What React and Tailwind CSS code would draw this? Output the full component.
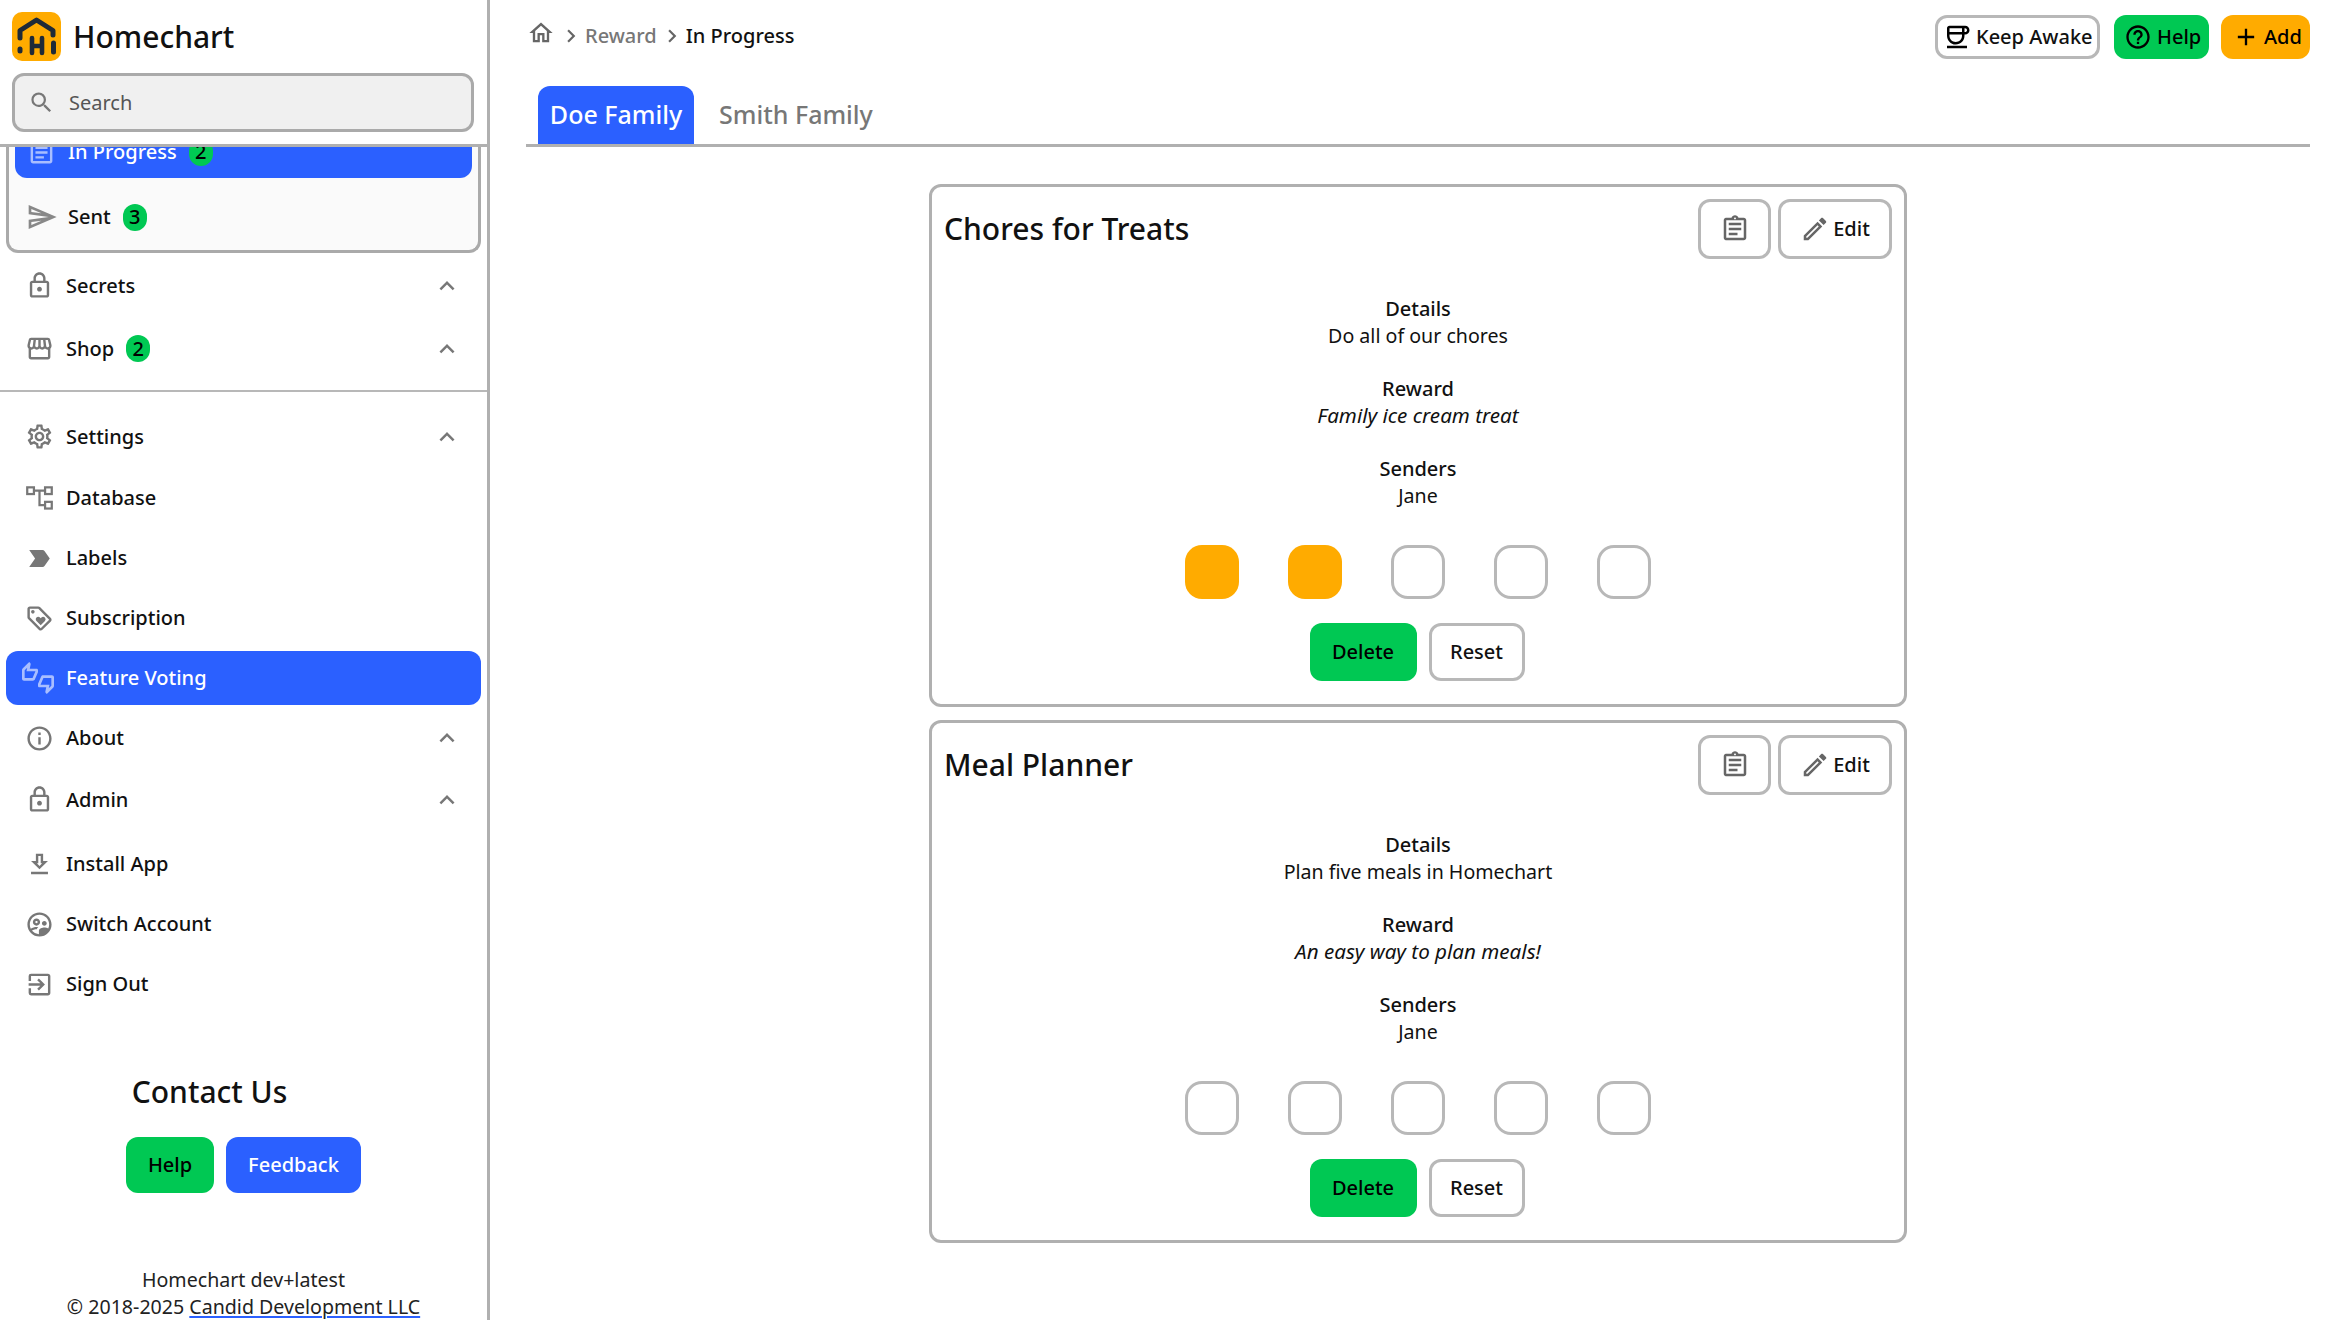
import React from "react";
import {
  MdOutlineLock, MdOutlineStorefront, MdOutlineSettings, MdLabelImportant, MdOutlineLoyalty,
  MdOutlineThumbsUpDown, MdInfoOutline, MdOutlineDownload, MdOutlineSupervisedUserCircle,
  MdOutlineExitToApp, MdOutlineArticle, MdOutlineSend, MdOutlineCoffee, MdHelpOutline, MdAdd,
  MdOutlineAssignment, MdOutlineEdit, MdSearch, MdOutlineHome, MdExpandLess, MdChevronRight,
} from "react-icons/md";

function DbIcon({ className }) {
  return (
    <svg viewBox="-1 -1 26 26" className={className} fill="none" stroke="currentColor" strokeWidth="2">
      <rect x="1" y="2" width="6" height="6" />
      <rect x="17" y="2" width="6" height="6" />
      <rect x="17" y="15" width="6" height="6" />
      <path d="M7 5h10M12 5v13h5" />
    </svg>
  );
}

function Logo() {
  return (
    <svg viewBox="0 0 49 49" className="w-[49px] h-[49px] shrink-0">
      <rect width="49" height="49" rx="10" fill="#ffab00" />
      <path d="M8 26 V18.5 L24.5 8 L41 18.5 V23" fill="none" stroke="#1f2a37" strokeWidth="5" strokeLinecap="round" strokeLinejoin="round" />
      <path d="M20 26v15M30 26v15M20 34h10" fill="none" stroke="#1f2a37" strokeWidth="4.6" strokeLinecap="round" />
      <path d="M41.5 31v9" stroke="#1f2a37" strokeWidth="5" strokeLinecap="round" />
      <path d="M8 37v2" stroke="#1f2a37" strokeWidth="5" strokeLinecap="round" />
    </svg>
  );
}

function Badge({ n }) {
  return (
    <span className="ml-[12px] w-[24px] h-[27px] rounded-full bg-[#00c853] text-black flex items-center justify-center text-[20px] font-medium">
      {n}
    </span>
  );
}

function NavRow({ icon: Icon, label, badge, chevron, tall, spaced }) {
  const height = tall ? "h-[63px]" : "h-[60px]";
  return (
    <div className={"flex items-center pl-[25px] pr-[25px] text-[20px] font-medium text-[#111111] " + height + (spaced ? " mt-[3px]" : "")}>
      <Icon className="w-[29px] h-[29px] mr-[12px] text-[#777777] shrink-0" />
      <span>{label}</span>
      {badge ? <Badge n={badge} /> : null}
      {chevron ? <MdExpandLess className="ml-auto w-[30px] h-[30px] text-[#777777]" /> : null}
    </div>
  );
}

function Sidebar() {
  return (
    <aside className="w-[490px] h-[1320px] shrink-0 border-r-[3px] border-[#b0b0b0] flex flex-col overflow-hidden bg-white">
      <header className="h-[147px] shrink-0 border-b-[3px] border-[#b0b0b0] px-[12px] pt-[12px]">
        <div className="flex items-center h-[49px]">
          <Logo />
          <span className="ml-[12px] text-[30px] font-medium text-[#111111]">Homechart</span>
        </div>
        <div className="mt-[12px] h-[59px] w-[462px] rounded-[12px] border-[3px] border-[#aaaaaa] bg-[#f0f0f0] flex items-center pl-[13px]">
          <MdSearch className="w-[27px] h-[27px] text-[#777777]" />
          <span className="ml-[14px] text-[20px] text-[#555555]">Search</span>
        </div>
      </header>

      <div className="flex-1 min-h-0 overflow-hidden">
        <div className="-mt-[21px] mb-[1px] mx-[6px] h-[127px] rounded-b-[12px] border-x-[3px] border-b-[3px] border-[#aaaaaa] bg-[#fafafa] px-[6px]">
          <div className="h-[52px] rounded-[12px] bg-[#2b60ff] flex items-center pl-[12px] text-[20px] font-medium text-white">
            <MdOutlineArticle className="w-[29px] h-[29px] mr-[12px] text-[#a9beff] shrink-0" />
            <span>In Progress</span>
            <Badge n="2" />
          </div>
          <div className="h-[66px] pt-[12px] flex items-center pl-[11px] text-[20px] font-medium text-[#111111]">
            <MdOutlineSend className="w-[32px] h-[32px] mr-[10px] text-[#888888] shrink-0" />
            <span>Sent</span>
            <Badge n="3" />
          </div>
        </div>

        <NavRow icon={MdOutlineLock} label="Secrets" chevron tall />
        <NavRow icon={MdOutlineStorefront} label="Shop" badge="2" chevron tall />
        <div className="mt-[10px] mb-[13px] h-[2px] bg-[#b8b8b8]" />
        <NavRow icon={MdOutlineSettings} label="Settings" chevron tall />
        <NavRow icon={DbIcon} label="Database" />
        <NavRow icon={MdLabelImportant} label="Labels" />
        <NavRow icon={MdOutlineLoyalty} label="Subscription" />
        <div className="py-[3px] px-[6px]">
          <div className="h-[54px] rounded-[12px] bg-[#2b60ff] flex items-center pl-[16px] text-[20px] font-medium text-white">
            <MdOutlineThumbsUpDown className="w-[32px] h-[32px] mr-[12px] text-[#a9beff] shrink-0" />
            <span>Feature Voting</span>
          </div>
        </div>
        <NavRow icon={MdInfoOutline} label="About" chevron />
        <NavRow icon={MdOutlineLock} label="Admin" chevron tall />
        <NavRow icon={MdOutlineDownload} label="Install App" spaced />
        <NavRow icon={MdOutlineSupervisedUserCircle} label="Switch Account" />
        <NavRow icon={MdOutlineExitToApp} label="Sign Out" />

        <div className="mt-[56px] w-[419px] text-center text-[30px] font-medium text-[#111111] leading-[44px]">
          Contact Us
        </div>
        <div className="mt-[23px] ml-[126px] flex gap-[12px]">
          <div className="w-[88px] h-[56px] rounded-[12px] bg-[#00c853] text-black text-[20px] font-medium flex items-center justify-center">Help</div>
          <div className="w-[135px] h-[56px] rounded-[12px] bg-[#2b60ff] text-white text-[20px] font-medium flex items-center justify-center">Feedback</div>
        </div>
        <div className="mt-[73px] text-center text-[19.6px] text-[#222222] leading-[27px]">
          <div>Homechart dev+latest</div>
          <div>
            © 2018-2025 <span className="underline decoration-[#2b60ff] decoration-2 underline-offset-2">Candid Development LLC</span>
          </div>
        </div>
      </div>
    </aside>
  );
}

function Circle({ on }) {
  return on ? (
    <div className="w-[54px] h-[54px] rounded-[17px] bg-[#ffab00]" />
  ) : (
    <div className="w-[54px] h-[54px] rounded-[17px] border-[3px] border-[#b8b8b8] bg-white" />
  );
}

function Field({ label, value, italic }) {
  return (
    <div className="text-center leading-[27px] text-[#111111]">
      <div className="font-medium text-[20px]">{label}</div>
      <div className={italic ? "italic text-[20.6px]" : "text-[19.6px]"}>{value}</div>
    </div>
  );
}

function Card({ title, details, reward, filled }) {
  return (
    <section className="w-[978px] h-[523px] rounded-[12px] border-[3px] border-[#b0b0b0] bg-white px-[12px] pt-[12px] flex flex-col">
      <div className="flex items-center h-[60px] shrink-0">
        <h2 className="text-[30px] font-medium text-[#111111] -mt-[1px]">{title}</h2>
        <div className="ml-auto flex gap-[7px]">
          <div className="w-[73px] h-[60px] rounded-[12px] border-[3px] border-[#b8b8b8] flex items-center justify-center">
            <MdOutlineAssignment className="w-[30px] h-[30px] text-[#666666]" />
          </div>
          <div className="w-[114px] h-[60px] rounded-[12px] border-[3px] border-[#b8b8b8] flex items-center justify-center text-[20px] font-medium text-[#111111]">
            <MdOutlineEdit className="w-[30px] h-[30px] mr-[3px] text-[#666666]" />
            <span>Edit</span>
          </div>
        </div>
      </div>
      <div className="mt-[36px] flex flex-col gap-[26px]">
        <Field label="Details" value={details} />
        <Field label="Reward" value={reward} italic />
        <Field label="Senders" value="Jane" />
      </div>
      <div className="mt-[36px] flex justify-center gap-[49px]">
        {[0, 1, 2, 3, 4].map((i) => (
          <Circle key={i} on={i < filled} />
        ))}
      </div>
      <div className="mt-[24px] pr-[2px] flex justify-center gap-[12px] text-[20px] font-medium">
        <div className="w-[107px] h-[58px] rounded-[12px] bg-[#00c853] text-black flex items-center justify-center">Delete</div>
        <div className="w-[96px] h-[58px] rounded-[12px] border-[3px] border-[#b8b8b8] text-[#111111] flex items-center justify-center">Reset</div>
      </div>
    </section>
  );
}

function Main() {
  return (
    <main className="flex-1 min-w-0 pl-[36px] pr-[37px] bg-white">
      <div className="h-[72px] flex items-start">
        <div className="flex items-center h-[72px] text-[20px] font-medium">
          <MdOutlineHome className="w-[28px] h-[28px] text-[#666666] -mt-[6px] ml-[1px]" />
          <MdChevronRight className="w-[26px] h-[26px] ml-[3px] text-[#666666]" />
          <span className="ml-[1px] text-[#777777]">Reward</span>
          <MdChevronRight className="w-[26px] h-[26px] ml-[2px] text-[#666666]" />
          <span className="ml-[1px] text-[#111111]">In Progress</span>
        </div>
        <div className="ml-auto mt-[15px] flex text-[20px] font-medium">
          <div className="w-[165px] h-[44px] mr-[14px] rounded-[12px] border-[3px] border-[#b8b8b8] flex items-center pl-[4px] text-[#111111]">
            <MdOutlineCoffee className="w-[30px] h-[30px] mr-[4px] text-black" />
            Keep Awake
          </div>
          <div className="w-[95px] h-[44px] mr-[12px] rounded-[12px] bg-[#00c853] flex items-center pl-[10px] text-black">
            <MdHelpOutline className="w-[28px] h-[28px] mr-[5px]" />
            Help
          </div>
          <div className="w-[89px] h-[44px] rounded-[12px] bg-[#ffab00] flex items-center pl-[11px] text-black">
            <MdAdd className="w-[28px] h-[28px] mr-[4px]" />
            Add
          </div>
        </div>
      </div>
      <div className="h-[75px] pt-[14px] pl-[12px] border-b-[3px] border-[#b0b0b0] flex items-start text-[25px] font-medium">
        <div className="w-[156px] h-[58px] rounded-t-[12px] bg-[#2b60ff] text-white flex items-center justify-center">Doe Family</div>
        <div className="ml-[25px] h-[58px] text-[#777777] flex items-center">Smith Family</div>
      </div>
      <div className="mt-[37px] flex flex-col items-center gap-[13px]">
        <Card title="Chores for Treats" details="Do all of our chores" reward="Family ice cream treat" filled={2} />
        <Card title="Meal Planner" details="Plan five meals in Homechart" reward="An easy way to plan meals!" filled={0} />
      </div>
    </main>
  );
}

export default function App() {
  return (
    <div className="flex w-[2347px] h-[1320px] overflow-hidden bg-white font-['Noto_Sans',sans-serif]">
      <Sidebar />
      <Main />
    </div>
  );
}
